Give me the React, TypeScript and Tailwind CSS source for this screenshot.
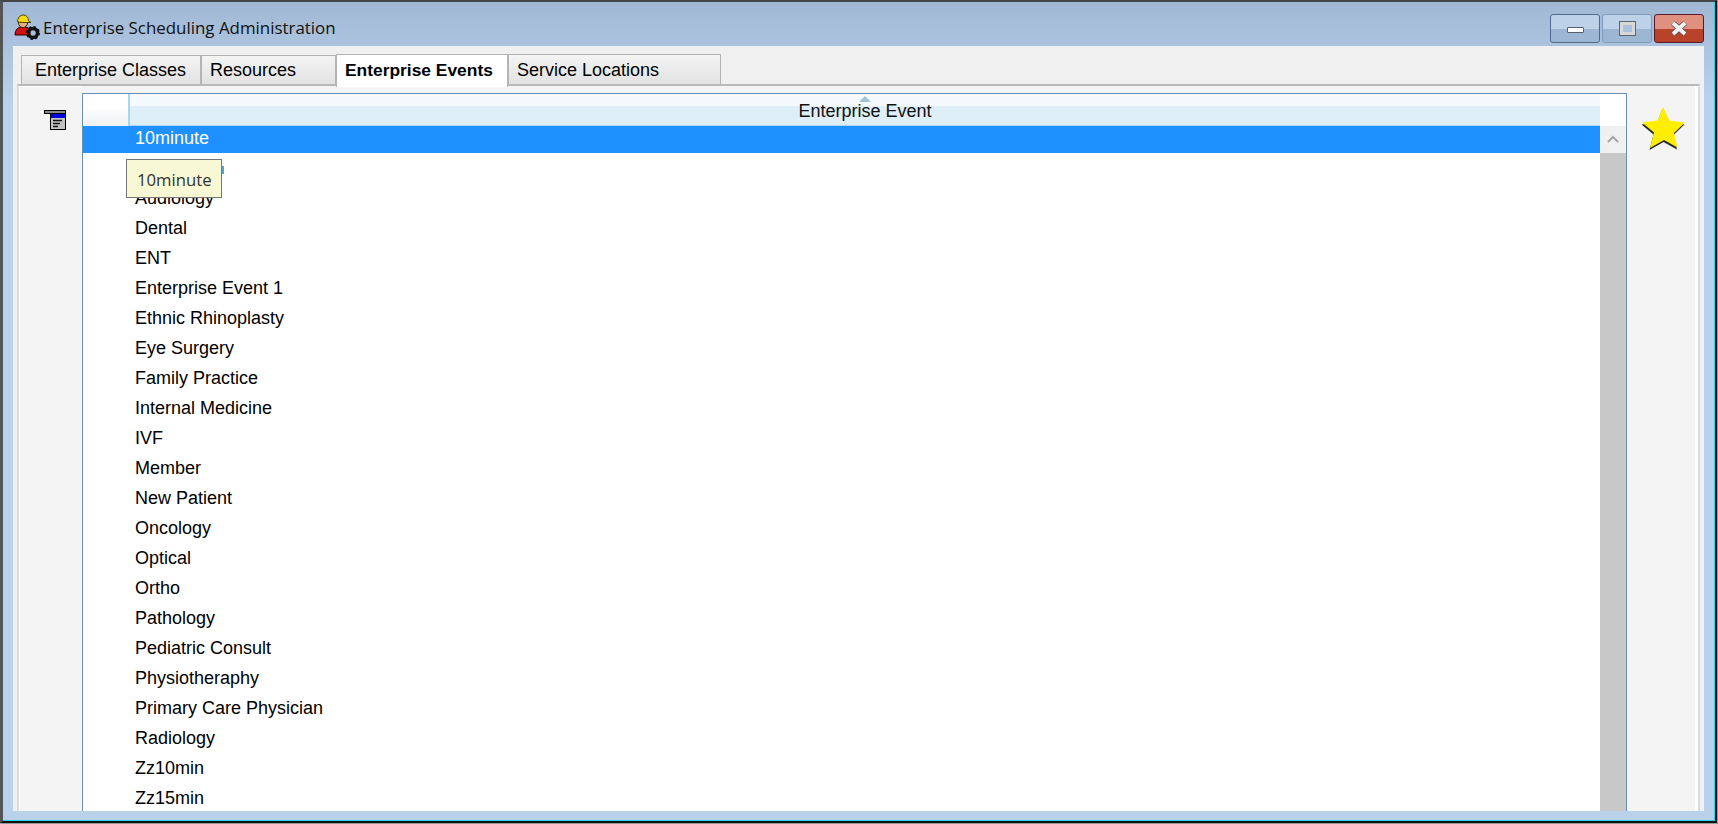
const rows = [
  'Audiology', 'Dental', 'ENT', 'Enterprise Event 1', 'Ethnic Rhinoplasty', 'Eye Surgery', 'Family Practice',
  'Internal Medicine', 'IVF', 'Member', 'New Patient', 'Oncology', 'Optical', 'Ortho', 'Pathology',
  'Pediatric Consult', 'Physiotheraphy', 'Primary Care Physician', 'Radiology', 'Zz10min', 'Zz15min',
];

function TitleIcon() {
  return (
    <svg width="26" height="26" viewBox="0 0 26 26" className="shrink-0">
      <path d="M1 21c0-5 3-8 6-8h4c3 0 5 2 5 5v3z" fill="#d01010" stroke="#300" strokeWidth="1" />
      <circle cx="9" cy="9" r="4.5" fill="#e8b080" stroke="#402010" strokeWidth="1" />
      <path d="M3.5 8c0-4 2.5-7 5.500-7s5.500 2 5.500 6l2.500 1.500h-8z" fill="#f5dc10" stroke="#504000" strokeWidth="1" />
      <circle cx="19" cy="19" r="4.500" fill="none" stroke="#111" strokeWidth="3.500" />
      <circle cx="19" cy="19" r="6" fill="none" stroke="#111" strokeWidth="2" strokeDasharray="2.200 2.500" />
    </svg>
  );
}

function DocIcon() {
  return (
    <svg width="22" height="20" viewBox="0 0 22 20">
      <rect x="0.500" y="0.500" width="21" height="3" fill="#8a8a8a" stroke="#000" />
      <rect x="6.500" y="3.500" width="15" height="16" fill="#c4c4c4" stroke="#000" />
      <rect x="7" y="4" width="14" height="4" fill="#0000d8" />
      <path d="M9 10.500h9M9 13.500h7M9 16.500h5" stroke="#111" strokeWidth="1.300" />
    </svg>
  );
}

function Star() {
  return (
    <svg width="46" height="44" viewBox="0 0 46 44">
      <path d="M23 1l6.500 13.500L45 16.500 34 27l3.500 14.500L24 34l-14 8 4-15.500L2 16.500l15.500-2z" fill="#2a2a2a" transform="translate(-0.500 2)" />
      <path d="M23 1l6.500 13.500L45 16.500 34 27l3.500 14.500L24 34l-14 8 4-15.500L2 16.500l15.500-2z" fill="#ffee00" />
    </svg>
  );
}

function Tab({ label, width, pad }: { label: string; width: string; pad: string }) {
  return (
    <div className={`${width} ${pad} h-[29px] border border-b-0 border-[#b4b4b4] bg-gradient-to-b from-[#f4f4f4] to-[#e2e2e2] pt-[4px] text-[18px] leading-[20px] text-black`}>
      {label}
    </div>
  );
}

function WinButton({ kind }: { kind: 'min' | 'max' | 'close' }) {
  if (kind === 'close') {
    return (
      <div className="flex h-[29px] w-[50px] items-center justify-center rounded-[3px] border border-[#5a1a2a] bg-gradient-to-b from-[#e0907f] from-50% to-[#b8432a] to-50%">
        <svg width="18" height="15" viewBox="0 0 18 15">
          <path d="M3 2l12 11M15 2L3 13" stroke="#5a4a4a" strokeWidth="5.500" />
          <path d="M3 2l12 11M15 2L3 13" stroke="#f2f2f2" strokeWidth="4" />
        </svg>
      </div>
    );
  }
  return (
    <div className={`flex h-[29px] w-[50px] items-center justify-center rounded-[3px] border bg-gradient-to-b from-[#bdd2e9] from-50% to-[#9db6d3] to-50% ${kind === 'min' ? 'border-[#4f6a8c]' : 'border-[#7f9cbf]'}`}>
      {kind === 'min' ? (
        <div className="mt-[2px] h-[6px] w-[17px] rounded-[1px] border border-[#55606c] bg-white" />
      ) : (
        <div className="h-[13px] w-[15px] border-[3px] border-[#d8d8d8] bg-[#a9c2de] outline outline-1 outline-[#5a6570]" />
      )}
    </div>
  );
}

export default function App() {
  return (
    <div className="h-[824px] w-[1718px] overflow-hidden bg-[#999] pr-px pb-px font-['Liberation_Sans',sans-serif]">
      <div className="h-[823px] w-[1717px] border-[2px] border-l-[3px] border-[#111] border-t-[#444] border-l-[#555]">
        <div className="flex h-full flex-col border-r border-b border-[#22d3ee] bg-gradient-to-b from-[#a0b8d4] from-0% via-[#b9d1ea] via-[12%] to-[#b9d1ea]">
          {/* title bar */}
          <div className="flex h-[44px] shrink-0 items-start pl-[11px] pr-[10px] pt-[12px]">
            <TitleIcon />
            <span className="ml-[3px] mt-[4px] font-['Open_Sans',sans-serif] text-[16.900px] leading-[20px] text-[#111]">Enterprise Scheduling Administration</span>
            <div className="ml-auto flex gap-[2px]">
              <WinButton kind="min" />
              <WinButton kind="max" />
              <WinButton kind="close" />
            </div>
          </div>

          {/* client area */}
          <div className="mx-[10px] mb-[9px] flex min-h-0 flex-1 flex-col overflow-hidden bg-[#f0f0f0] pl-[4px] pr-[4px] pt-[8px]">
            <div className="relative z-10 flex h-[30px] shrink-0 items-start pl-[4px]">
              <div className="mt-[1px]"><Tab label="Enterprise Classes" width="w-[180px]" pad="pl-[13px]" /></div>
              <div className="mt-[1px]"><Tab label="Resources" width="w-[135px]" pad="pl-[8px]" /></div>
              <div className="h-[33px] w-[172px] border border-b-0 border-[#b4b4b4] bg-white pl-[8px] pt-[5px] text-[17.400px] font-bold leading-[20px] text-black">Enterprise Events</div>
              <div className="h-[30px] w-[213px] border border-b-0 border-[#b4b4b4] bg-gradient-to-b from-[#f4f4f4] to-[#e2e2e2] pl-[8px] pt-[5px] text-[18px] leading-[20px] text-black">Service Locations</div>
            </div>

            <div className="flex min-h-0 flex-1 border-l-2 border-t-2 border-r-2 border-[#dcdcdc] border-t-[#b8b8b8] bg-[#f4f4f4]">
              <div className="w-[63px] shrink-0 border-l border-t border-white pl-[24px] pt-[23px]">
                <DocIcon />
              </div>

              {/* grid */}
              <div className="relative mt-[7px] w-[1545px] shrink-0 overflow-hidden border-l border-r border-t border-[#6a8fb5] bg-white">
                <div className="flex h-[32px] text-[18px]">
                  <div className="h-full w-[47px] border-r-2 border-[#a8d8f0] bg-gradient-to-b from-white from-40% to-[#eef0f2]" />
                  <div className="relative flex h-full flex-1 items-center justify-center border-b border-[#a8d8f0] bg-gradient-to-b from-[#f3f9fc] from-40% to-[#deeff8] to-40%">
                    <span className="pt-[4px] text-[#111]">Enterprise Event</span>
                    <div className="absolute left-[729px] top-[2px] h-0 w-0 border-x-[6px] border-b-[6px] border-x-transparent border-b-[#a3c4d8]" />
                  </div>
                  <div className="w-[26px] bg-white" />
                </div>
                <div className="flex">
                  <div className="min-w-0 flex-1">
                    <div className="flex h-[27px] bg-[#1e90ff] pl-[52px] text-[18px] leading-[24px] text-white">10minute</div>
                    <div className="h-[30px]">
                      <div className="ml-[138px] h-[8px] w-[3px] translate-y-[13px] bg-[#4aa6dc]" />
                    </div>
                    {rows.map((name) => (
                      <div key={name} className="h-[30px] pl-[52px] text-[18px] leading-[31px] text-black">{name}</div>
                    ))}
                  </div>
                  <div className="w-[26px] shrink-0 bg-[#c8c8c8]">
                    <div className="flex h-[27px] items-center justify-center bg-[#f0f0f0]">
                      <svg width="14" height="9" viewBox="0 0 14 9">
                        <path d="M2 7l5-5 5 5" fill="none" stroke="#a6a6a6" strokeWidth="2" />
                      </svg>
                    </div>
                  </div>
                </div>
                {/* tooltip */}
                <div className="absolute left-[43px] top-[65px] h-[39px] w-[96px] border border-[#767676] bg-[#f8f8d4] pl-[10px] font-['Open_Sans',sans-serif] text-[16.700px] leading-[39px] text-[#333]">10minute</div>
              </div>

              <div className="flex flex-1 border-r-[3px] border-white pl-[13px] pt-[20px]">
                <Star />
              </div>
            </div>
          </div>
        </div>
      </div>
    </div>
  );
}
